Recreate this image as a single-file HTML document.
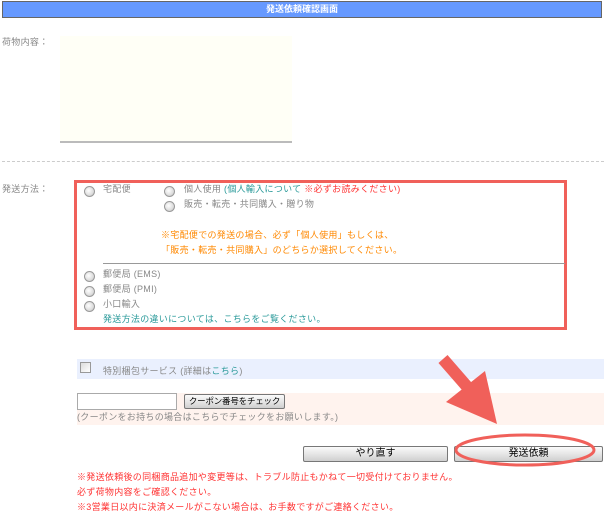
<!DOCTYPE html>
<html><head><meta charset="utf-8"><style>
*{margin:0;padding:0;box-sizing:border-box}
body{width:604px;height:527px;background:#fff;position:relative;overflow:hidden;font-family:"Liberation Sans","Noto Sans CJK JP",sans-serif;font-size:9px;color:#888}
.a{position:absolute;white-space:nowrap;line-height:11px;letter-spacing:0.3px}
.r{position:absolute;width:11px;height:11px;border-radius:50%;border:1px solid #999;background:radial-gradient(circle at 40% 40%,#fff,#ddd 60%,#bbb)}
.btn{position:absolute;height:16px;border:1px solid #777;border-radius:2px;background:linear-gradient(#fafafa,#e6e6e6 50%,#cfcfcf);color:#000;font-size:10px;text-align:center;line-height:14px;white-space:nowrap;overflow:hidden}
.red{color:#f33}.org{color:#f80}.tl{color:#2a9a9a}
</style></head><body>
<div style="position:absolute;left:2px;top:1px;width:600px;height:17px;background:#6699ff;border:1px solid #666;color:#fff;font-weight:bold;text-align:center;line-height:15px;font-size:9px">発送依頼確認画面</div>
<div class="a" style="left:2px;top:37px">荷物内容：</div>
<div style="position:absolute;left:60px;top:36px;width:232px;height:107px;background:#fffff6;border-bottom:2px solid #bbb"></div>
<div style="position:absolute;left:2px;top:161px;width:602px;border-top:1px dashed #ccc"></div>
<div class="a" style="left:2px;top:184px">発送方法：</div>
<div style="position:absolute;left:74px;top:180px;width:493px;height:150px;border:3px solid #f0605a"></div>
<div class="r" style="left:84px;top:186px"></div><div class="a" style="left:103px;top:184px">宅配便</div>
<div class="r" style="left:164px;top:186px"></div><div class="a" style="left:184px;top:184px">個人使用 <span class="tl">(個人輸入について</span> <span class="red">※必ずお読みください)</span></div>
<div class="r" style="left:164px;top:201px"></div><div class="a" style="left:184px;top:199px">販売・転売・共同購入・贈り物</div>
<div class="a org" style="left:161px;top:230px">※宅配便での発送の場合、必ず「個人使用」もしくは、</div>
<div class="a org" style="left:161px;top:245px">「販売・転売・共同購入」のどちらか選択してください。</div>
<div style="position:absolute;left:103px;top:263px;width:462px;border-top:1px solid #999"></div>
<div class="r" style="left:84px;top:271px"></div><div class="a" style="left:103px;top:269px">郵便局 (EMS)</div>
<div class="r" style="left:84px;top:286px"></div><div class="a" style="left:103px;top:284px">郵便局 (PMI)</div>
<div class="r" style="left:84px;top:301px"></div><div class="a" style="left:103px;top:299px">小口輸入</div>
<div class="a tl" style="left:103px;top:314px">発送方法の違いについては、こちらをご覧ください。</div>
<div style="position:absolute;left:77px;top:359px;width:527px;height:20px;background:#eaf0fe"></div>
<div style="position:absolute;left:80px;top:362px;width:11px;height:11px;border:1px solid #999;background:linear-gradient(135deg,#ddd,#fff)"></div>
<div class="a" style="left:103px;top:366px">特別梱包サービス (詳細は<span class="tl">こちら</span>)</div>
<div style="position:absolute;left:77px;top:393px;width:527px;height:32px;background:#fff3ee"></div>
<div style="position:absolute;left:77px;top:393px;width:100px;height:17px;background:#fff;border:1px solid #aaa"></div>
<div class="btn" style="left:184px;top:394px;width:101px;height:15px;line-height:13px;font-size:8.5px;letter-spacing:-0.2px">クーポン番号をチェック</div>
<div class="a" style="left:77px;top:412px">(クーポンをお持ちの場合はこちらでチェックをお願いします。)</div>
<div class="btn" style="left:303px;top:446px;width:145px">やり直す</div>
<div class="btn" style="left:454px;top:446px;width:149px">発送依頼</div>
<div class="a red" style="left:77px;top:472px">※発送依頼後の同梱商品追加や変更等は、トラブル防止もかねて一切受付けておりません。</div>
<div class="a red" style="left:77px;top:487px">必ず荷物内容をご確認ください。</div>
<div class="a red" style="left:77px;top:502px">※3営業日以内に決済メールがこない場合は、お手数ですがご連絡ください。</div>
<svg style="position:absolute;left:0;top:0" width="604" height="527">
<ellipse cx="525" cy="450" rx="69" ry="15" fill="none" stroke="#f0605a" stroke-width="3"/>
<line x1="443" y1="359" x2="470" y2="390" stroke="#f0605a" stroke-width="12"/>
<polygon points="446,402 485,371 497,424" fill="#f0605a"/>
</svg>
</body></html>
